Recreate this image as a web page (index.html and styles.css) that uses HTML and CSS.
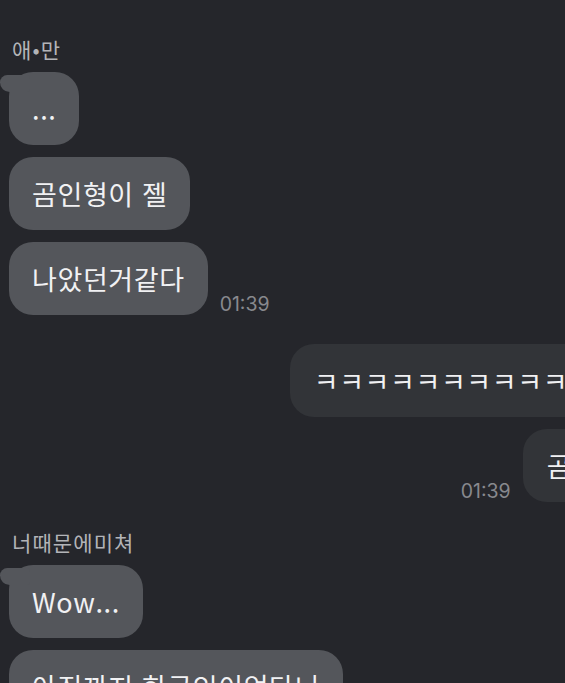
FILE: index.html
```html
<!DOCTYPE html>
<html lang="ko">
<head>
  <meta charset="UTF-8">
  <meta name="viewport" content="width=device-width, initial-scale=1.0">
  <title>채팅</title>
  <link rel="stylesheet" href="styles.css">
</head>
<body>
  <div id="chat">
    <div class="row sent top-row">
      <span class="time">01:37</span>
      <div class="spacer"></div>
    </div>

    <div class="name">애•만</div>
    <div class="row received">
      <div class="bubble first">...</div>
    </div>
    <div class="row received">
      <div class="bubble">곰인형이 젤</div>
    </div>
    <div class="row received">
      <div class="bubble">나았던거같다</div>
      <span class="time">01:39</span>
    </div>

    <div class="row sent gap-big">
      <div class="bubble mine">ㅋㅋㅋㅋㅋㅋㅋㅋㅋㅋㅋㅋ</div>
    </div>
    <div class="row sent">
      <span class="time">01:39</span>
      <div class="bubble mine short">곰인형</div>
    </div>

    <div class="name gap-big">너때문에미쳐</div>
    <div class="row received">
      <div class="bubble first">Wow...</div>
    </div>
    <div class="row received">
      <div class="bubble">아직까지 한국인이었다니</div>
    </div>
  </div>
</body>
</html>
```

FILE: styles.css
```css
html, body {
  margin: 0;
  padding: 0;
  height: 100%;
  overflow: hidden;
  background: #25262b;
  font-family: "Noto Sans CJK KR", "Noto Sans", sans-serif;
  color: #f1f1f3;
}

#chat {
  width: 643px;
  display: flex;
  flex-direction: column;
  align-items: stretch;
}

.row {
  display: flex;
  align-items: flex-end;
  gap: 12px;
  margin-top: 12px;
}

.row.received {
  padding-left: 9px;
}

.row.sent {
  justify-content: flex-end;
}

.top-row {
  margin-top: -16px;
  height: 20px;
}

.top-row .spacer {
  width: 93px;
}

.gap-big {
  margin-top: 29px !important;
}

.name {
  padding-left: 12px;
  margin-top: 33px;
  margin-bottom: -1px;
  font-size: 21px;
  line-height: 24px;
  letter-spacing: 1.1px;
  color: #b3b4b8;
}

.name.gap-big {
  margin-top: 28px !important;
}

.bubble {
  position: relative;
  padding: 18px 23px;
  font-size: 27px;
  line-height: 37px;
  letter-spacing: 0.6px;
  background: #54565b;
  border-radius: 24px;
  white-space: nowrap;
}

.bubble.mine {
  background: #323438;
  padding: 18px 24px;
}

.bubble.mine.short {
  padding-right: 20px;
}

.bubble.first::before {
  content: "";
  position: absolute;
  left: -9px;
  top: 3px;
  width: 30px;
  height: 17px;
  background: #54565b;
  border-radius: 9px 4px 4px 12px;
}

.time {
  font-family: Inter, "Noto Sans", sans-serif;
  font-size: 19.5px;
  line-height: 20px;
  color: #88898e;
  margin-bottom: 1px;
}
```
